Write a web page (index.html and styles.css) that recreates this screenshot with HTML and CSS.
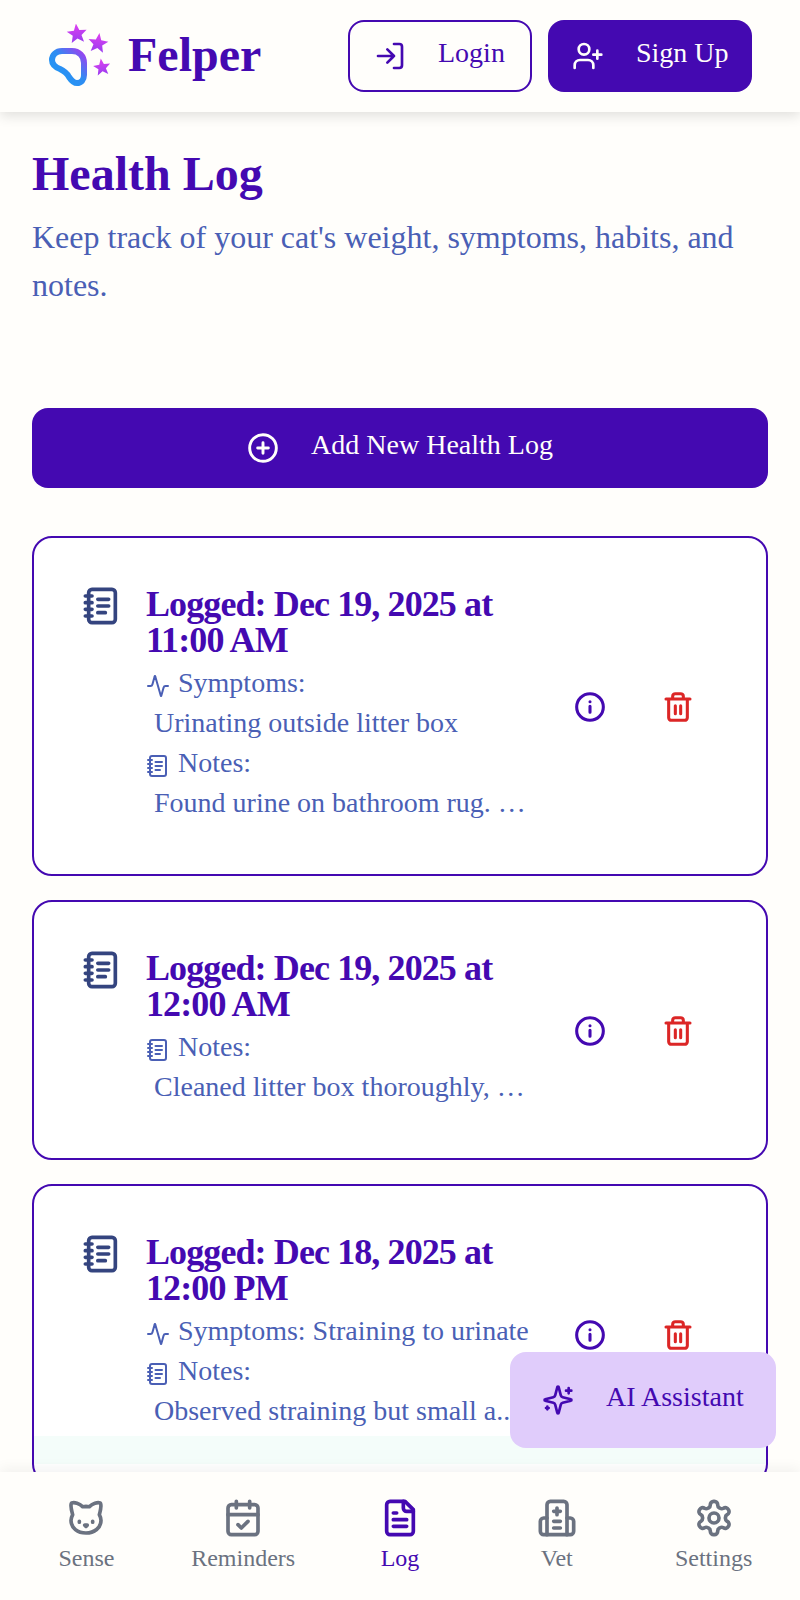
FILE: index.html

```html
<!DOCTYPE html>
<html lang="en">
<head>
  <meta charset="UTF-8" />
  <title>Felper - Health Log</title>
  <link rel="stylesheet" href="styles.css">
</head>
<body>

<svg class="defs" width="0" height="0">
  <defs>
    <linearGradient id="logoBlue" x1="0" y1="1" x2="1" y2="0">
      <stop offset="0" stop-color="#1e9bf5" />
      <stop offset="0.55" stop-color="#2f8cf2" />
      <stop offset="1" stop-color="#a13df0" />
    </linearGradient>
    <linearGradient id="logoPink" x1="0.5" y1="0" x2="0.5" y2="1">
      <stop offset="0" stop-color="#e040f0" />
      <stop offset="1" stop-color="#9a3df0" />
    </linearGradient>
    <symbol id="book" viewBox="0 0 24 24">
      <path d="M6 2h12a2 2 0 0 1 2 2v16a2 2 0 0 1-2 2H6a2 2 0 0 1-2-2V4a2 2 0 0 1 2-2Z" />
      <path d="M2 6h4M2 10h4M2 14h4M2 18h4M9.5 8H16M9.5 12H16M9.5 16H14" />
    </symbol>
    <symbol id="info" viewBox="0 0 24 24">
      <circle cx="12" cy="12" r="10" />
      <path d="M12 16v-4.500M12 8h.01" />
    </symbol>
  </defs>
</svg>

<div class="app">
  <header class="topbar">
    <div class="brand">
      <svg class="logo" viewBox="0 0 64 64">
        <path class="logo-paw" d="M4 36c0-5 4-9 10-9h10c7 0 12 5 12 12v12c0 5-3 8-7 8-4 0-6-3-8-6-2-4-5-6-9-8-5-2-8-5-8-9Z" />
        <path class="logo-star" transform="translate(29 10) rotate(-6) scale(1.050)" d="M0-10L2.600-3.500 9.500-3.100 4.200 1.300 5.900 8.100 0 4.300-5.900 8.100-4.200 1.300-9.500-3.100-2.600-3.500Z" />
        <path class="logo-star" transform="translate(50 19.500) rotate(8) scale(1.050)" d="M0-10L2.600-3.500 9.500-3.100 4.200 1.300 5.900 8.100 0 4.300-5.900 8.100-4.200 1.300-9.500-3.100-2.600-3.500Z" />
        <path class="logo-star" transform="translate(54 43.500) rotate(-8) scale(.900)" d="M0-10L2.600-3.500 9.500-3.100 4.200 1.300 5.900 8.100 0 4.300-5.900 8.100-4.200 1.300-9.500-3.100-2.600-3.500Z" />
      </svg>
      <span class="brand-name">Felper</span>
    </div>
    <div class="auth">
      <button class="btn btn-outline">
        <svg class="icon-btn" viewBox="0 0 24 24"><path d="M15 3h4a2 2 0 0 1 2 2v14a2 2 0 0 1-2 2h-4M10 17l5-5-5-5M15 12H3" /></svg>
        <span class="label">Login</span>
      </button>
      <button class="btn btn-solid">
        <svg class="icon-btn" viewBox="0 0 24 24"><path d="M16 21v-2a4 4 0 0 0-4-4H6a4 4 0 0 0-4 4v2" /><circle cx="9" cy="7" r="4" /><path d="M19 8v6M22 11h-6" /></svg>
        <span class="label">Sign Up</span>
      </button>
    </div>
  </header>

  <main class="content">
    <h1>Health Log</h1>
    <p class="subtitle">Keep track of your cat's weight, symptoms, habits, and notes.</p>

    <button class="add-log">
      <svg class="icon-add" viewBox="0 0 24 24"><circle cx="12" cy="12" r="10" /><path d="M12 8v8M8 12h8" /></svg>
      <span class="label">Add New Health Log</span>
    </button>

    <div class="log-list">
      <section class="log-card">
        <svg class="log-icon"><use href="#book" /></svg>
        <div class="log-body">
          <h2>Logged: Dec 19, 2025 at 11:00 AM</h2>
          <div class="log-label"><svg class="icon-sm" viewBox="0 0 24 24"><path d="M22 12h-2.500a2 2 0 0 0-1.900 1.500l-2.300 8.300a.25.25 0 0 1-.5 0L9.200 2.200a.25.25 0 0 0-.5 0l-2.300 8.300A2 2 0 0 1 4.500 12H2" /></svg> Symptoms:</div>
          <div class="log-value">Urinating outside litter box</div>
          <div class="log-label"><svg class="icon-sm"><use href="#book" /></svg> Notes:</div>
          <div class="log-value">Found urine on bathroom rug. Seemed stressed</div>
        </div>
        <div class="log-actions">
          <svg class="icon-action info"><use href="#info" /></svg>
          <svg class="icon-action trash" viewBox="0 0 24 24"><path d="M3 6h18M19 6v14a2 2 0 0 1-2 2H7a2 2 0 0 1-2-2V6M8 6V4a2 2 0 0 1 2-2h4a2 2 0 0 1 2 2v2M10 11v6M14 11v6" /></svg>
        </div>
      </section>

      <section class="log-card">
        <svg class="log-icon"><use href="#book" /></svg>
        <div class="log-body">
          <h2>Logged: Dec 19, 2025 at 12:00 AM</h2>
          <div class="log-label"><svg class="icon-sm"><use href="#book" /></svg> Notes:</div>
          <div class="log-value">Cleaned litter box thoroughly, changed brand</div>
        </div>
        <div class="log-actions">
          <svg class="icon-action info"><use href="#info" /></svg>
          <svg class="icon-action trash" viewBox="0 0 24 24"><path d="M3 6h18M19 6v14a2 2 0 0 1-2 2H7a2 2 0 0 1-2-2V6M8 6V4a2 2 0 0 1 2-2h4a2 2 0 0 1 2 2v2M10 11v6M14 11v6" /></svg>
        </div>
      </section>

      <section class="log-card">
        <svg class="log-icon"><use href="#book" /></svg>
        <div class="log-body">
          <h2>Logged: Dec 18, 2025 at 12:00 PM</h2>
          <div class="log-label"><svg class="icon-sm" viewBox="0 0 24 24"><path d="M22 12h-2.500a2 2 0 0 0-1.900 1.500l-2.300 8.300a.25.25 0 0 1-.5 0L9.200 2.200a.25.25 0 0 0-.5 0l-2.300 8.300A2 2 0 0 1 4.500 12H2" /></svg> Symptoms: Straining to urinate</div>
          <div class="log-label"><svg class="icon-sm"><use href="#book" /></svg> Notes:</div>
          <div class="log-value log-value-short">Observed straining but small a..</div>
        </div>
        <div class="log-actions">
          <svg class="icon-action info"><use href="#info" /></svg>
          <svg class="icon-action trash" viewBox="0 0 24 24"><path d="M3 6h18M19 6v14a2 2 0 0 1-2 2H7a2 2 0 0 1-2-2V6M8 6V4a2 2 0 0 1 2-2h4a2 2 0 0 1 2 2v2M10 11v6M14 11v6" /></svg>
        </div>
      </section>
    </div>

    <div class="card-fade"></div>
  </main>

  <button class="assistant">
    <svg class="icon-btn" viewBox="0 0 24 24"><path d="M9.900 15.500A2 2 0 0 0 8.500 14.100L2.400 12.500a.5.5 0 0 1 0-1l6.100-1.600a2 2 0 0 0 1.400-1.400l1.600-6.100a.5.5 0 0 1 1 0l1.600 6.100a2 2 0 0 0 1.400 1.400l6.100 1.600a.5.5 0 0 1 0 1l-6.100 1.600a2 2 0 0 0-1.400 1.400l-1.600 6.100a.5.5 0 0 1-1 0Z" /><path d="M20 3v4M22 5h-4M4 17v2M5 18H3" /></svg>
    <span class="label">AI Assistant</span>
  </button>

  <nav class="tabbar">
    <div class="tab">
      <svg viewBox="0 0 24 24"><path d="M12 5c.67 0 1.350.090 2 .260 1.780-2 5.030-2.840 6.420-2.260 1.400.580-.420 7-.420 7 .570 1.070 1 2.240 1 3.440C21 17.900 16.970 21 12 21s-9-3-9-7.560c0-1.250.500-2.400 1-3.440 0 0-1.890-6.420-.500-7 1.390-.580 4.720.230 6.500 2.230A9.040 9.040 0 0 1 12 5Z" /><path d="M8 14v.500M16 14v.500M11.250 16.250h1.500L12 17Z" /></svg>
      <span>Sense</span>
    </div>
    <div class="tab">
      <svg viewBox="0 0 24 24"><path d="M8 2v4M16 2v4" /><rect x="3" y="4" width="18" height="18" rx="2" /><path d="M3 10h18M9 16l2 2 4-4" /></svg>
      <span>Reminders</span>
    </div>
    <div class="tab tab-active">
      <svg viewBox="0 0 24 24"><path d="M15 2H6a2 2 0 0 0-2 2v16a2 2 0 0 0 2 2h12a2 2 0 0 0 2-2V7Z" /><path d="M14 2v4a2 2 0 0 0 2 2h4M10 9H8M16 13H8M16 17H8" /></svg>
      <span>Log</span>
    </div>
    <div class="tab">
      <svg viewBox="0 0 24 24"><path d="M12 6v4M14 14h-4M14 18h-4M14 8h-4" /><path d="M18 12h2a2 2 0 0 1 2 2v6a2 2 0 0 1-2 2H4a2 2 0 0 1-2-2v-6a2 2 0 0 1 2-2h2" /><path d="M18 22V4a2 2 0 0 0-2-2H8a2 2 0 0 0-2 2v18" /></svg>
      <span>Vet</span>
    </div>
    <div class="tab">
      <svg viewBox="0 0 24 24"><path d="M12.220 2h-.440a2 2 0 0 0-2 2v.180a2 2 0 0 1-1 1.730l-.430.250a2 2 0 0 1-2 0l-.150-.080a2 2 0 0 0-2.730.730l-.220.380a2 2 0 0 0 .730 2.730l.150.100a2 2 0 0 1 1 1.720v.510a2 2 0 0 1-1 1.740l-.150.090a2 2 0 0 0-.730 2.730l.220.380a2 2 0 0 0 2.730.730l.150-.080a2 2 0 0 1 2 0l.430.250a2 2 0 0 1 1 1.730V20a2 2 0 0 0 2 2h.440a2 2 0 0 0 2-2v-.180a2 2 0 0 1 1-1.730l.430-.250a2 2 0 0 1 2 0l.150.080a2 2 0 0 0 2.730-.730l.220-.390a2 2 0 0 0-.730-2.730l-.150-.080a2 2 0 0 1-1-1.740v-.500a2 2 0 0 1 1-1.740l.150-.090a2 2 0 0 0 .730-2.730l-.220-.380a2 2 0 0 0-2.730-.730l-.150.080a2 2 0 0 1-2 0l-.430-.250a2 2 0 0 1-1-1.730V4a2 2 0 0 0-2-2Z" /><circle cx="12" cy="12" r="3" /></svg>
      <span>Settings</span>
    </div>
  </nav>
</div>

</body>
</html>
```

FILE: styles.css

```css
* {
  box-sizing: border-box;
}
html, body {
  margin: 0;
  padding: 0;
}
body {
  font-family: "Liberation Serif", serif;
  background: #fffefb;
  color: #4a5fb5;
}
.defs {
  position: absolute;
}
svg {
  fill: none;
  stroke: currentColor;
  stroke-linecap: round;
  stroke-linejoin: round;
  flex-shrink: 0;
}
.app {
  position: relative;
  height: 1600px;
  display: flex;
  flex-direction: column;
  overflow: hidden;
}
.label {
  margin-bottom: 6px;
  white-space: nowrap;
}

/* top bar */
.topbar {
  height: 112px;
  display: flex;
  align-items: center;
  justify-content: space-between;
  padding: 0 48px;
  background: #fffefb;
  box-shadow: 0 4px 12px rgba(0, 0, 0, 0.12);
  z-index: 2;
  flex-shrink: 0;
}
.brand {
  display: flex;
  align-items: center;
  gap: 16px;
}
.logo {
  width: 64px;
  height: 64px;
}
.logo-paw {
  stroke: url(#logoBlue);
  stroke-width: 6;
}
.logo-star {
  fill: url(#logoPink);
  stroke: none;
}
.brand-name {
  font-size: 48px;
  font-weight: bold;
  color: #4409b1;
  margin-bottom: 4px;
}
.auth {
  display: flex;
  gap: 16px;
}
.btn {
  height: 72px;
  display: flex;
  align-items: center;
  font-family: inherit;
  font-size: 28px;
  border-radius: 16px;
  gap: 32px;
}
.btn-outline {
  width: 184px;
  padding: 0 24px;
  background: transparent;
  color: #4409b1;
  border: 2px solid #4409b1;
}
.btn-solid {
  width: 204px;
  padding: 0 24px;
  background: #4409b1;
  color: #fffefb;
  border: none;
}
.icon-btn {
  width: 32px;
  height: 32px;
  stroke-width: 2;
}

/* main */
.content {
  flex: 1;
  min-height: 0;
  overflow: hidden;
  position: relative;
  padding: 34px 32px 0;
}
h1 {
  margin: 0;
  font-size: 48px;
  line-height: 56px;
  color: #4409b1;
}
.subtitle {
  margin: 11px 0 0;
  font-size: 32px;
  line-height: 48px;
}
.add-log {
  width: 100%;
  height: 80px;
  margin-top: 99px;
  display: flex;
  align-items: center;
  justify-content: center;
  gap: 32px;
  font-family: inherit;
  font-size: 28px;
  background: #4409b1;
  color: #fffefb;
  border: none;
  border-radius: 16px;
}
.icon-add {
  width: 32px;
  height: 32px;
  stroke-width: 2.200;
}
.log-list {
  display: flex;
  flex-direction: column;
  gap: 24px;
  margin-top: 48px;
}
.log-card {
  display: flex;
  align-items: flex-start;
  gap: 24px;
  padding: 48px 48px 51px;
  background: #fff;
  border: 2px solid #4409b1;
  border-radius: 20px;
  flex-shrink: 0;
}
.log-icon {
  width: 40px;
  height: 40px;
  color: #34447f;
  stroke-width: 2.200;
}
.log-body {
  width: 384px;
  min-width: 0;
}
h2 {
  margin: 0 0 5px;
  font-size: 36px;
  line-height: 36px;
  letter-spacing: -0.9px;
  color: #4409b1;
}
.log-label, .log-value {
  font-size: 28px;
  line-height: 40px;
  white-space: nowrap;
}
.log-value {
  padding-left: 8px;
  overflow: hidden;
  text-overflow: ellipsis;
}
.log-value-short {
  width: 372px;
}
.icon-sm {
  width: 24px;
  height: 24px;
  vertical-align: -6px;
  margin-right: 1px;
  stroke-width: 2;
}
.log-actions {
  align-self: center;
  display: flex;
  gap: 56px;
  margin: 4px 0 0 20px;
}
.icon-action {
  width: 32px;
  height: 32px;
  stroke-width: 2.300;
}
.info {
  color: #4409b1;
}
.trash {
  color: #dc2626;
}
.card-fade {
  position: absolute;
  left: 34px;
  right: 34px;
  bottom: 8px;
  height: 28px;
  background: #f4fdfa;
}

/* floating assistant */
.assistant {
  position: absolute;
  left: 510px;
  top: 1352px;
  width: 266px;
  height: 96px;
  display: flex;
  align-items: center;
  gap: 32px;
  padding: 0 32px;
  font-family: inherit;
  font-size: 28px;
  color: #4409b1;
  background: #e0ccfb;
  border: none;
  border-radius: 16px;
  z-index: 3;
}

/* bottom tabs */
.tabbar {
  height: 128px;
  display: grid;
  grid-template-columns: repeat(5, 1fr);
  padding: 26px 8px 0;
  background: #fffefb;
  box-shadow: 0 -4px 12px rgba(0, 0, 0, 0.05);
  z-index: 2;
  flex-shrink: 0;
}
.tab {
  display: flex;
  flex-direction: column;
  align-items: center;
  gap: 4px;
  font-size: 24px;
  line-height: 32px;
  color: #6b7280;
}
.tab svg {
  width: 40px;
  height: 40px;
  stroke-width: 2.200;
}
.tab-active {
  color: #4409b1;
}
```
